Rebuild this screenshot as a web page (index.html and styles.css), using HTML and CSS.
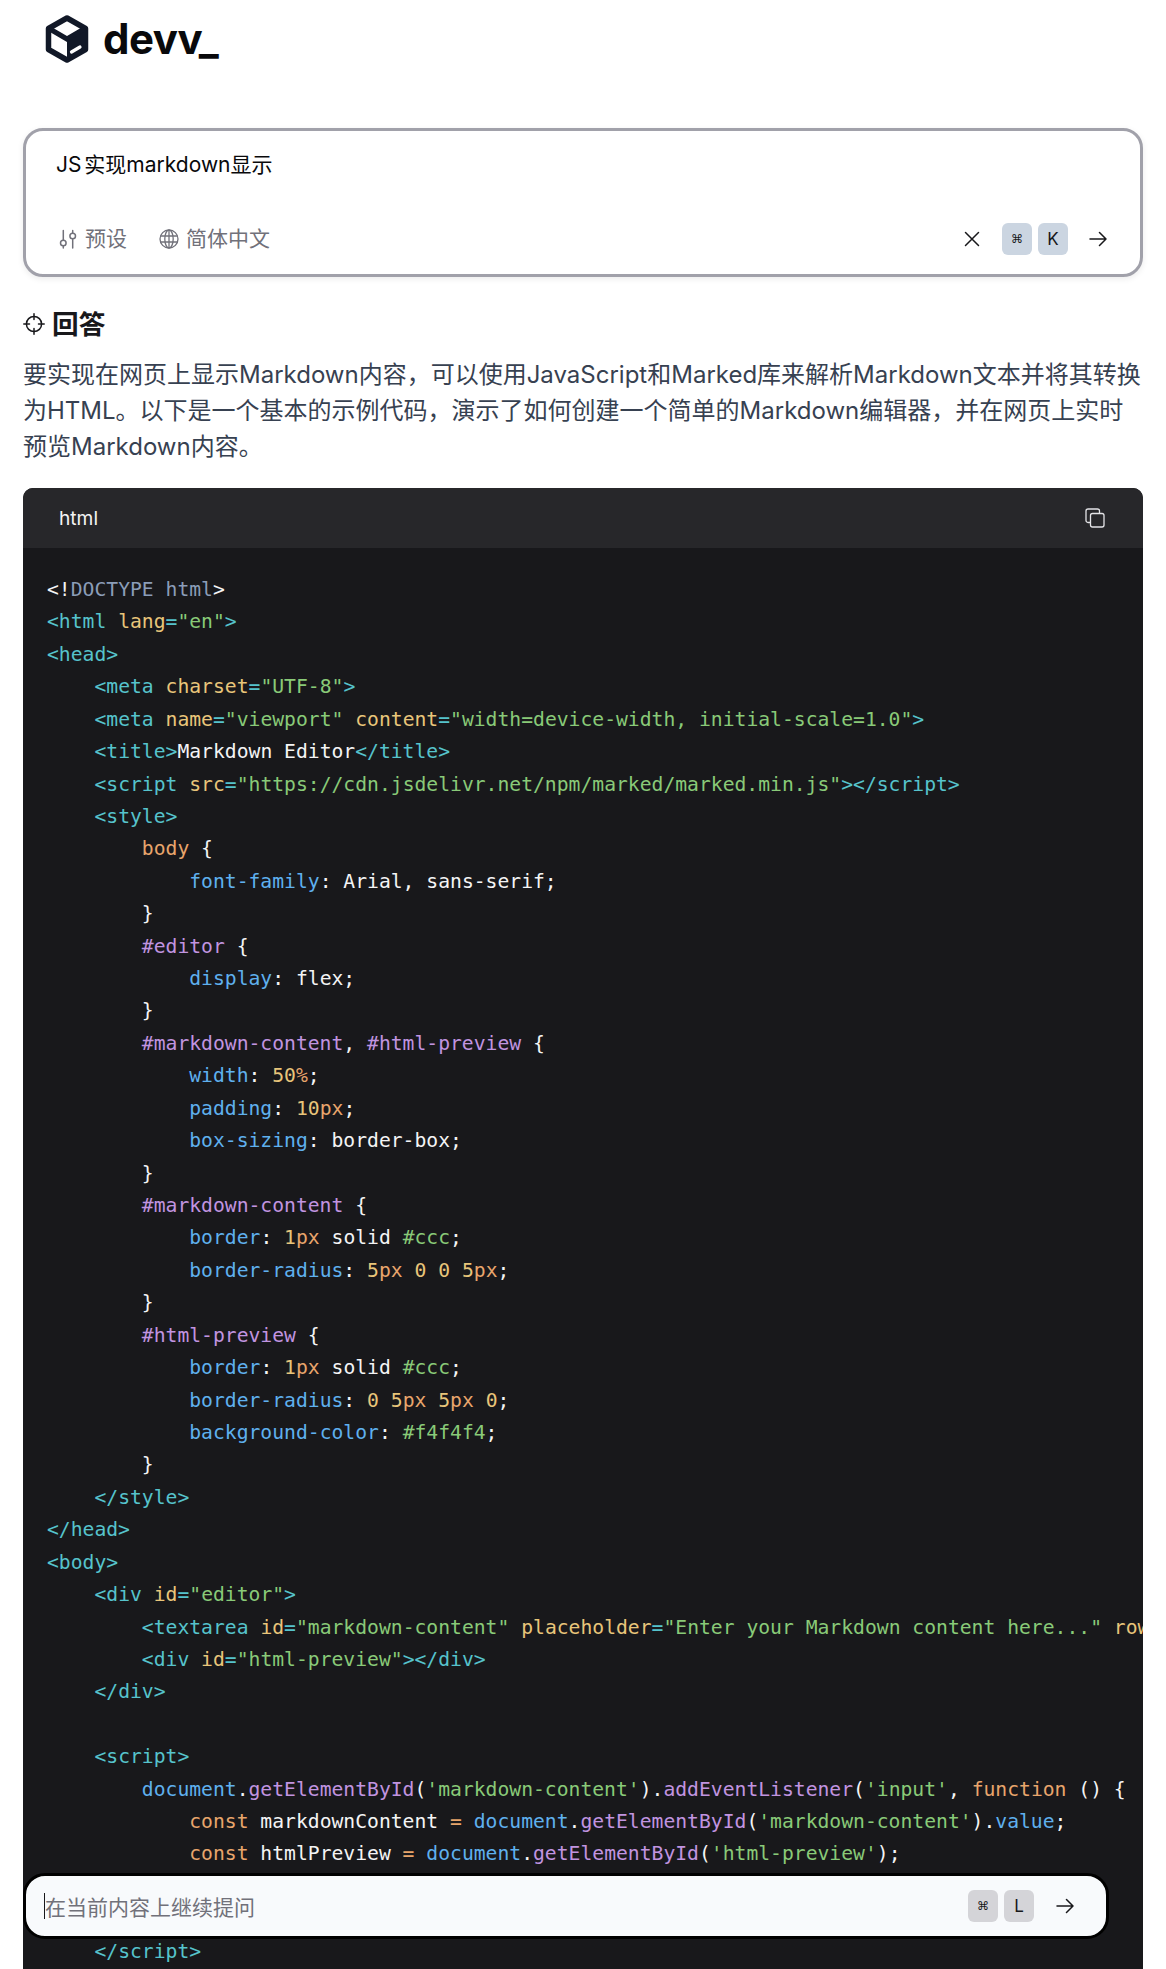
FILE: index.html
```html
<!DOCTYPE html>
<html lang="zh">
<head>
<meta charset="utf-8">
<title>devv_</title>
<link rel="stylesheet" href="styles.css">
</head>
<body>
<div class="page">
<header class="brand">
<svg class="brand-icon" viewBox="0 0 44 48"><path d="M22 3 40.5 13.5V34.5L22 45 3.5 34.5V13.5Z" fill="none" stroke="#111827" stroke-width="5.5" stroke-linejoin="round"/><path d="M22 24V45L40.5 34.5V13.5Z" fill="#111827"/><path d="M4 13.5 22 24 40 13.5" fill="none" stroke="#111827" stroke-width="5"/><path d="M26.5 37 35 32" stroke="#fff" stroke-width="3.2" stroke-linecap="round"/></svg>
<span class="brand-name">devv_</span>
</header>
<section class="ask">
<div class="ask-text">JS 实现markdown显示</div>
<div class="ask-bar">
<span class="opt"><svg class="opt-sliders" viewBox="0 0 18 20" fill="none" stroke="currentColor" stroke-width="1.5" stroke-linecap="round"><path d="M4.300 1.500V11M4.300 17V19M13.700 1.500V4M13.700 10V19"/><circle cx="4.300" cy="14" r="2.800"/><circle cx="13.700" cy="7" r="2.800"/></svg>预设</span>
<span class="opt opt-lang"><svg class="opt-globe" viewBox="0 0 20 20" fill="none" stroke="currentColor" stroke-width="1.300"><circle cx="10" cy="10" r="9"/><ellipse cx="10" cy="10" rx="4.200" ry="9"/><path d="M10 1V19M1.500 7H18.500M1.500 13H18.500"/></svg>简体中文</span>
<span class="spacer"></span>
<svg class="ico-x" viewBox="0 0 16 16" fill="none" stroke="#18181b" stroke-width="1.500" stroke-linecap="round"><path d="M1.500 1.500 14.500 14.500M14.500 1.500 1.500 14.500"/></svg>
<kbd class="key key-slate key-cmd">⌘</kbd><kbd class="key key-slate">K</kbd>
<svg class="ico-arrow" viewBox="0 0 18 16" fill="none" stroke="#18181b" stroke-width="1.500" stroke-linecap="round" stroke-linejoin="round"><path d="M1 8H17M10.500 1.500 17 8 10.500 14.500"/></svg>
</div>
</section>
<h2 class="answer-title"><svg class="answer-icon" viewBox="0 0 22 22" fill="none" stroke="#18181b" stroke-width="1.500" stroke-linecap="round"><circle cx="11" cy="11" r="7.600"/><path d="M11 .8V6.500M11 15.500V21.200M.8 11H6.500M15.500 11H21.200"/></svg>回答</h2>
<p class="answer-text">要实现在网页上显示Markdown内容，可以使用JavaScript和Marked库来解析Markdown文本并将其转换<br>为HTML。以下是一个基本的示例代码，演示了如何创建一个简单的Markdown编辑器，并在网页上实时<br>预览Markdown内容。</p>
<section class="code">
<div class="code-head"><span>html</span><svg class="copy" viewBox="0 0 20 20" fill="none" stroke="#e4e4e7" stroke-width="1.300" stroke-linejoin="round"><rect x="5.500" y="5.500" width="13.500" height="13.500" rx="2"/><path d="M5.500 14.500H3A2 2 0 0 1 1 12.500V3A2 2 0 0 1 3 1H12.500A2 2 0 0 1 14.500 3V5.500"/></svg></div>
<div class="code-body">
<div class="ln">&lt;!<span class="d">DOCTYPE html</span>&gt;</div>
<div class="ln"><span class="t">&lt;html</span> <span class="a">lang</span><span class="t">=</span><span class="s">"en"</span><span class="t">&gt;</span></div>
<div class="ln"><span class="t">&lt;head&gt;</span></div>
<div class="ln">    <span class="t">&lt;meta</span> <span class="a">charset</span><span class="t">=</span><span class="s">"UTF-8"</span><span class="t">&gt;</span></div>
<div class="ln">    <span class="t">&lt;meta</span> <span class="a">name</span><span class="t">=</span><span class="s">"viewport"</span> <span class="a">content</span><span class="t">=</span><span class="s">"width=device-width, initial-scale=1.0"</span><span class="t">&gt;</span></div>
<div class="ln">    <span class="t">&lt;title&gt;</span>Markdown Editor<span class="t">&lt;/title&gt;</span></div>
<div class="ln">    <span class="t">&lt;script</span> <span class="a">src</span><span class="t">=</span><span class="s">"https://cdn.jsdelivr.net/npm/marked/marked.min.js"</span><span class="t">&gt;&lt;/script&gt;</span></div>
<div class="ln">    <span class="t">&lt;style&gt;</span></div>
<div class="ln">        <span class="o">body</span> {</div>
<div class="ln">            <span class="p">font-family</span>: Arial, sans-serif;</div>
<div class="ln">        }</div>
<div class="ln">        <span class="i">#editor</span> {</div>
<div class="ln">            <span class="p">display</span>: flex;</div>
<div class="ln">        }</div>
<div class="ln">        <span class="i">#markdown-content</span>, <span class="i">#html-preview</span> {</div>
<div class="ln">            <span class="p">width</span>: <span class="n">50</span><span class="o">%</span>;</div>
<div class="ln">            <span class="p">padding</span>: <span class="n">10</span><span class="o">px</span>;</div>
<div class="ln">            <span class="p">box-sizing</span>: border-box;</div>
<div class="ln">        }</div>
<div class="ln">        <span class="i">#markdown-content</span> {</div>
<div class="ln">            <span class="p">border</span>: <span class="n">1</span><span class="o">px</span> solid <span class="s">#ccc</span>;</div>
<div class="ln">            <span class="p">border-radius</span>: <span class="n">5</span><span class="o">px</span> <span class="n">0</span> <span class="n">0</span> <span class="n">5</span><span class="o">px</span>;</div>
<div class="ln">        }</div>
<div class="ln">        <span class="i">#html-preview</span> {</div>
<div class="ln">            <span class="p">border</span>: <span class="n">1</span><span class="o">px</span> solid <span class="s">#ccc</span>;</div>
<div class="ln">            <span class="p">border-radius</span>: <span class="n">0</span> <span class="n">5</span><span class="o">px</span> <span class="n">5</span><span class="o">px</span> <span class="n">0</span>;</div>
<div class="ln">            <span class="p">background-color</span>: <span class="s">#f4f4f4</span>;</div>
<div class="ln">        }</div>
<div class="ln">    <span class="t">&lt;/style&gt;</span></div>
<div class="ln"><span class="t">&lt;/head&gt;</span></div>
<div class="ln"><span class="t">&lt;body&gt;</span></div>
<div class="ln">    <span class="t">&lt;div</span> <span class="a">id</span><span class="t">=</span><span class="s">"editor"</span><span class="t">&gt;</span></div>
<div class="ln">        <span class="t">&lt;textarea</span> <span class="a">id</span><span class="t">=</span><span class="s">"markdown-content"</span> <span class="a">placeholder</span><span class="t">=</span><span class="s">"Enter your Markdown content here..."</span> <span class="a">rows</span><span class="t">=</span><span class="s">"10"</span><span class="t">&gt;&lt;/textarea&gt;</span></div>
<div class="ln">        <span class="t">&lt;div</span> <span class="a">id</span><span class="t">=</span><span class="s">"html-preview"</span><span class="t">&gt;&lt;/div&gt;</span></div>
<div class="ln">    <span class="t">&lt;/div&gt;</span></div>
<div class="ln"> </div>
<div class="ln">    <span class="t">&lt;script&gt;</span></div>
<div class="ln">        <span class="p">document</span>.<span class="i">getElementById</span>(<span class="s">'markdown-content'</span>).<span class="i">addEventListener</span>(<span class="s">'input'</span>, <span class="o">function</span> () {</div>
<div class="ln">            <span class="o">const</span> markdownContent <span class="o">=</span> <span class="p">document</span>.<span class="i">getElementById</span>(<span class="s">'markdown-content'</span>).<span class="p">value</span>;</div>
<div class="ln">            <span class="o">const</span> htmlPreview <span class="o">=</span> <span class="p">document</span>.<span class="i">getElementById</span>(<span class="s">'html-preview'</span>);</div>
<div class="ln">            htmlPreview.<span class="p">innerHTML</span> <span class="o">=</span> <span class="i">marked</span>(markdownContent);</div>
<div class="ln">        });</div>
<div class="ln">    <span class="t">&lt;/script&gt;</span></div>
</div>
</section>
</div>
<div class="followup">
<span class="caret"></span><span class="followup-text">在当前内容上继续提问</span>
<span class="spacer"></span>
<kbd class="key key-zinc key-cmd">⌘</kbd><kbd class="key key-zinc">L</kbd>
<svg class="ico-arrow" viewBox="0 0 18 16" fill="none" stroke="#18181b" stroke-width="1.500" stroke-linecap="round" stroke-linejoin="round"><path d="M1 8H17M10.500 1.500 17 8 10.500 14.500"/></svg>
</div>
</body>
</html>
```
FILE: styles.css
```css
* { box-sizing: border-box; }
html, body { margin: 0; padding: 0; background: #fff; }
body {
  position: relative;
  height: 1969px;
  overflow: hidden;
  font-family: Inter, "Noto Sans CJK SC", sans-serif;
  color: #18181b;
}
.page { padding: 0 23px; }
.brand { display: flex; align-items: center; gap: 14px; height: 80px; padding: 0 0 2px 22px; }
.brand-icon { width: 44px; height: 48px; flex: none; }
.brand-name { font-size: 42px; font-weight: 700; color: #09090b; letter-spacing: -.5px; line-height: 1; }
.ask {
  margin-top: 48px;
  height: 149px;
  border: 3px solid #a1a1aa;
  border-radius: 20px;
  padding: 0 33px 0 30px;
  display: flex;
  flex-direction: column;
  box-shadow: 0 2px 6px rgba(0,0,0,.08);
}
.ask-text { margin-top: 21px; font-size: 21px; line-height: 26px; color: #09090b; word-spacing: -3px; }
.ask-bar { margin: auto 0 19px 3px; display: flex; align-items: center; height: 32px; }
.opt { display: flex; align-items: center; color: #71717a; font-size: 21px; line-height: 32px; }
.opt-sliders { width: 18px; height: 20px; margin-right: 8px; }
.opt-lang { margin-left: 32px; }
.opt-globe { width: 20px; height: 20px; margin-right: 7px; }
.spacer { flex: 1; }
.ico-x { width: 16px; height: 16px; margin-right: 22px; }
.key {
  width: 30px; height: 32px;
  display: flex; align-items: center; justify-content: center;
  border-radius: 6px;
  font-family: Inter, sans-serif;
  font-size: 17px;
  color: #18181b;
}
.key-cmd { font-family: "DejaVu Sans", sans-serif; font-size: 12px; margin-right: 6px; }
.key-slate { background: #cbd5e1; }
.key-zinc { background: #d4d4d8; }
.ico-arrow { width: 18px; height: 16px; margin-left: 21px; flex: none; }
.answer-title {
  margin: 29px 0 0;
  display: flex; align-items: center; gap: 7px;
  font-size: 26.67px; line-height: 36px; font-weight: 700; color: #18181b;
}
.answer-icon { width: 22px; height: 22px; }
.answer-text { margin: 15px 0 0; font-size: 24px; line-height: 36px; color: #374151; white-space: nowrap; }
.code { margin-top: 23px; border-radius: 10px 10px 0 0; overflow: hidden; background: #18181b; }
.code-head {
  height: 60px; background: #27272a; color: #f4f4f5;
  display: flex; align-items: center; justify-content: space-between;
  padding: 0 38px 0 36px; font-size: 19.2px;
}
.copy { width: 20px; height: 20px; }
.code-body {
  padding: 26px 0 25px 24px; overflow: hidden;
  font-family: "DejaVu Sans Mono", monospace;
  font-size: 19.7px; line-height: 32.43px; color: #f4f4f5;
}
.ln { white-space: pre; height: 32.43px; }
.d { color: #8b9db8; }
.t { color: #56c3cc; }
.a { color: #e8c57a; }
.s { color: #89ca78; }
.p { color: #5fb0ee; }
.i { color: #c194e0; }
.o { color: #e8a56c; }
.n { color: #e8c57a; }
.followup {
  position: absolute; left: 23px; top: 1873px;
  width: 1086px; height: 66px;
  background: #f8fafc;
  border: 3px solid #000;
  border-radius: 22px;
  display: flex; align-items: center;
  padding: 0 32px 0 18px;
}
.followup .ico-arrow { margin-left: 22px; }
.caret { width: 1px; height: 26px; background: #18181b; flex: none; }
.followup-text { font-size: 21px; color: #71717a; }
```
